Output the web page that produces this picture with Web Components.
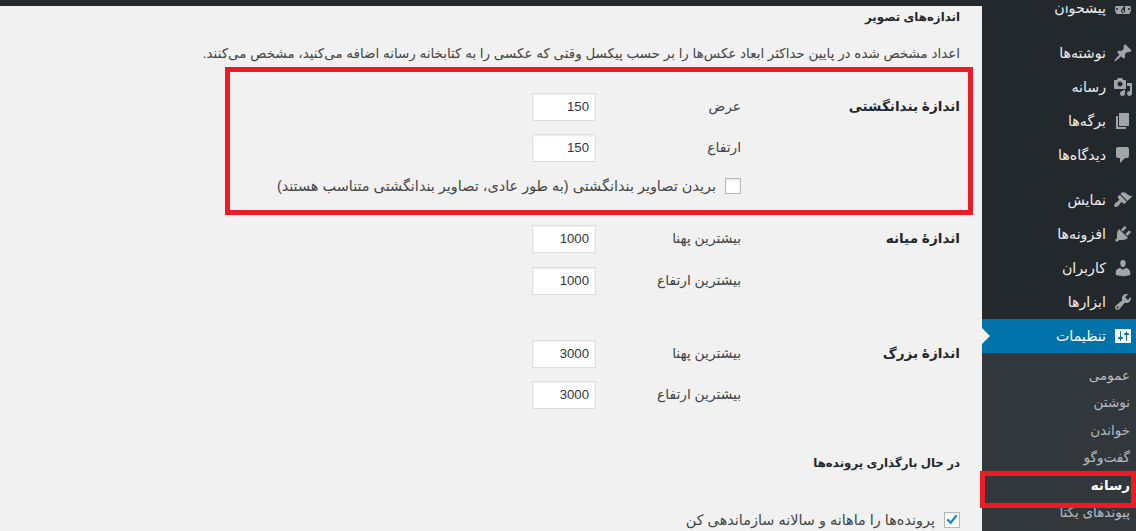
<!DOCTYPE html>
<html lang="fa" dir="rtl">
<head>
<meta charset="utf-8">
<title>تنظیمات رسانه</title>
<style>
  html, body { margin: 0; height: 100%; overflow: hidden; background: #f1f1f1; }
  body { font-family: "Liberation Sans", "DejaVu Sans", sans-serif; font-size: 13px; color: #444; }
</style>
</head>
<body>
<wp-admin>
  <wp-menu slot="menu">
    <wp-menu-item icon="dashboard">پیشخوان</wp-menu-item>
    <wp-menu-item icon="post" gap>نوشته‌ها</wp-menu-item>
    <wp-menu-item icon="media">رسانه</wp-menu-item>
    <wp-menu-item icon="page">برگه‌ها</wp-menu-item>
    <wp-menu-item icon="comment">دیدگاه‌ها</wp-menu-item>
    <wp-menu-item icon="appearance" gap>نمایش</wp-menu-item>
    <wp-menu-item icon="plugin">افزونه‌ها</wp-menu-item>
    <wp-menu-item icon="users">کاربران</wp-menu-item>
    <wp-menu-item icon="tools">ابزارها</wp-menu-item>
    <wp-menu-item icon="settings" active>تنظیمات</wp-menu-item>
    <wp-submenu>
      <wp-sub-item>عمومی</wp-sub-item>
      <wp-sub-item>نوشتن</wp-sub-item>
      <wp-sub-item>خواندن</wp-sub-item>
      <wp-sub-item>گفت‌وگو</wp-sub-item>
      <wp-sub-item current>رسانه</wp-sub-item>
      <wp-sub-item>پیوندهای یکتا</wp-sub-item>
    </wp-submenu>
  </wp-menu>

  <wp-heading>اندازه‌های تصویر</wp-heading>
  <wp-note>اعداد مشخص شده در پایین حداکثر ابعاد عکس‌ها را بر حسب پیکسل وقتی که عکسی را به کتابخانه رسانه اضافه می‌کنید، مشخص می‌کنند.</wp-note>

  <wp-size-group title="اندازۀ بندانگشتی" style="margin-top:29px">
    <wp-num-field label="عرض" value="150"></wp-num-field>
    <wp-num-field label="ارتفاع" value="150"></wp-num-field>
    <wp-check>بریدن تصاویر بندانگشتی (به طور عادی، تصاویر بندانگشتی متناسب هستند)</wp-check>
  </wp-size-group>
  <wp-size-group title="اندازۀ میانه" style="margin-top:30px;--field-gap:14px">
    <wp-num-field label="بیشترین پهنا" value="1000"></wp-num-field>
    <wp-num-field label="بیشترین ارتفاع" value="1000"></wp-num-field>
  </wp-size-group>
  <wp-size-group title="اندازۀ بزرگ" style="margin-top:45px">
    <wp-num-field label="بیشترین پهنا" value="3000"></wp-num-field>
    <wp-num-field label="بیشترین ارتفاع" value="3000"></wp-num-field>
  </wp-size-group>

  <wp-heading style="margin-top:45px">در حال بارگذاری پرونده‌ها</wp-heading>
  <wp-check checked style="margin:39px 0 0">پرونده‌ها را ماهانه و سالانه سازماندهی کن</wp-check>

  <red-mark slot="marks" style="left:225px;top:67px;width:748px;height:148px"></red-mark>
  <red-mark slot="marks" style="left:980px;top:471px;width:156px;height:37px"></red-mark>
</wp-admin>

<script>
const FONT = '"Liberation Sans", "DejaVu Sans", sans-serif';

const ICONS = {
  dashboard: 'M3.76 16h12.48c1.1-1.37 1.76-3.11 1.76-5 0-4.42-3.58-8-8-8s-8 3.58-8 8c0 1.89.66 3.63 1.76 5zM10 4c.55 0 1 .45 1 1s-.45 1-1 1-1-.45-1-1 .45-1 1-1zM6 6c.55 0 1 .45 1 1s-.45 1-1 1-1-.45-1-1 .45-1 1-1zm8 0c.55 0 1 .45 1 1s-.45 1-1 1-1-.45-1-1 .45-1 1-1zm-5.37 5.55L12 7v6c0 1.1-.9 2-2 2s-2-.9-2-2c0-.57.24-1.08.63-1.45zM4 10c.55 0 1 .45 1 1s-.45 1-1 1-1-.45-1-1 .45-1 1-1zm12 0c.55 0 1 .45 1 1s-.45 1-1 1-1-.45-1-1 .45-1 1-1zm-5 3c0-.55-.45-1-1-1s-1 .45-1 1 .45 1 1 1 1-.45 1-1z',
  post: 'M10.44 3.02l1.82-1.82 6.36 6.35-1.83 1.82c-1.05-.68-2.48-.57-3.41.36l-.75.75c-.92.93-1.04 2.35-.35 3.41l-1.83 1.82-2.41-2.41-2.8 2.79c-.42.42-3.38 2.71-3.8 2.29s1.86-3.39 2.28-3.81l2.79-2.79L4.1 9.36l1.83-1.82c1.05.69 2.48.57 3.4-.36l.75-.75c.93-.92 1.05-2.35.36-3.41z',
  media: 'M13 11V4c0-.55-.45-1-1-1h-1.67L9 1H5L3.67 3H2c-.55 0-1 .45-1 1v7c0 .55.45 1 1 1h10c.55 0 1-.45 1-1zM7 4.5c1.38 0 2.5 1.12 2.5 2.5S8.38 9.5 7 9.5 4.5 8.38 4.5 7 5.62 4.5 7 4.5zM14 6h5v10.5c0 1.38-1.12 2.5-2.5 2.5S14 17.88 14 16.5s1.12-2.5 2.5-2.5c.17 0 .34.02.5.05V9h-3V6zm-4 8.05V13h2v3.5c0 1.38-1.12 2.5-2.5 2.5S7 17.88 7 16.5 8.12 14 9.5 14c.17 0 .34.02.5.05z',
  page: 'M6 15V2h10v13H6zm-1 1h8v2H3V5h2v11z',
  comment: 'M5 2h9c1.1 0 2 .9 2 2v7c0 1.1-.9 2-2 2h-2l-5 5v-5H5c-1.1 0-2-.9-2-2V4c0-1.1.9-2 2-2z',
  appearance: 'M14.48 11.06L7.41 3.99l1.5-1.5c.5-.56 2.3-.47 3.51.32 1.21.8 1.43 1.28 2.91 2.1 1.18.64 2.45 1.26 4.45.85zm-.71.71L6.7 4.7 4.93 6.47c-.39.39-.39 1.02 0 1.41l1.06 1.06c.39.39.39 1.03 0 1.42-.6.6-1.43 1.11-2.21 1.69-.35.26-.7.53-1.01.84C1.43 13.23.91 15.24 1.47 16.4c.59 1.16 2.61.64 3.94-.69.31-.31.58-.66.84-1.01.58-.78 1.09-1.61 1.69-2.21.39-.39 1.03-.39 1.42 0l1.06 1.06c.39.39 1.02.39 1.41 0z',
  plugin: 'M13.11 4.36L9.87 7.6 8 5.73l3.24-3.24c.35-.34 1.05-.2 1.56.32.52.51.66 1.21.31 1.55zm-8 1.77l.91-1.12 9.01 9.01-1.19.84c-.71.71-2.63 1.16-3.82 1.16H6.14L4.9 17.26c-.59.59-1.54.59-2.12 0-.59-.58-.59-1.53 0-2.12l1.24-1.24v-3.88c0-1.13.4-3.19 1.09-3.89zm7.26 3.97l3.24-3.24c.34-.35 1.04-.21 1.55.31.52.51.66 1.21.31 1.55l-3.24 3.25z',
  users: 'M10 9.25c-2.27 0-2.73-3.44-2.73-3.44C7 4.02 7.82 2 9.97 2c2.16 0 2.98 2.02 2.71 3.81 0 0-.41 3.44-2.68 3.44zm0 2.57L12.72 10c2.39 0 4.52 2.33 4.52 4.53v2.49s-3.65 1.13-7.24 1.13c-3.65 0-7.24-1.13-7.24-1.13v-2.49c0-2.25 1.94-4.48 4.47-4.48z',
  tools: 'M16.68 9.77c-1.34 1.34-3.3 1.67-4.95.99l-5.41 6.52c-.99.99-2.59.99-3.58 0s-.99-2.59 0-3.57l6.52-5.42c-.68-1.65-.35-3.61.99-4.95 1.28-1.28 3.12-1.62 4.72-1.06l-2.89 2.89 2.82 2.82 2.86-2.87c.53 1.58.18 3.39-1.08 4.65zM3.81 16.21c.4.39 1.04.39 1.43 0 .4-.4.4-1.04 0-1.43-.39-.4-1.03-.4-1.43 0-.39.39-.39 1.03 0 1.43z',
  settings: 'M18 16V4c0-.55-.45-1-1-1H3c-.55 0-1 .45-1 1v12c0 .55.45 1 1 1h14c.55 0 1-.45 1-1zM8 11h1c.55 0 1 .45 1 1s-.45 1-1 1H8v1.5c0 .28-.22.5-.5.5s-.5-.22-.5-.5V13H6c-.55 0-1-.45-1-1s.45-1 1-1h1V5.5c0-.28.22-.5.5-.5s.5.22.5.5V11zm5-2h-1c-.55 0-1-.45-1-1s.45-1 1-1h1V5.5c0-.28.22-.5.5-.5s.5.22.5.5V7h1c.55 0 1 .45 1 1s-.45 1-1 1h-1v5.5c0 .28-.22.5-.5.5s-.5-.22-.5-.5V9z'
};

class WpAdmin extends HTMLElement {
  constructor() {
    super();
    this.attachShadow({ mode: 'open' });
    this.shadowRoot.innerHTML = `
      <style>
        :host { display: block; position: relative; width: 1136px; height: 531px; overflow: hidden; background: #f1f1f1; }
        .bar { height: 6px; background: #23282d; }
        .frame { display: flex; height: 525px; }
        .side { flex: 0 0 154px; background: #23282d; overflow: hidden; }
        .main { flex: 0 0 982px; box-sizing: border-box; padding-right: 22px; overflow: hidden; }
      </style>
      <div class="bar"></div>
      <div class="frame">
        <div class="side"><slot name="menu"></slot></div>
        <div class="main"><slot></slot></div>
      </div>
      <slot name="marks"></slot>
    `;
  }
}

class WpMenu extends HTMLElement {
  constructor() {
    super();
    this.attachShadow({ mode: 'open' });
    this.shadowRoot.innerHTML = `
      <style>
        :host { display: block; margin-top: -15px; }
      </style>
      <slot></slot>
    `;
  }
}

class WpMenuItem extends HTMLElement {
  constructor() {
    super();
    this.attachShadow({ mode: 'open' });
  }

  connectedCallback() {
    const active = this.hasAttribute('active');
    const d = ICONS[this.getAttribute('icon')] || '';
    this.shadowRoot.innerHTML = `
      <style>
        :host { display: block; position: relative; }
        :host([gap]) { margin-top: 11px; }
        .row { display: flex; align-items: center; height: 34px; padding-right: 3px; color: #eee; font: 14.2px/18px ${FONT}; }
        svg { flex: 0 0 20px; width: 20px; height: 20px; margin-left: 7px; fill: #a0a5aa; fill-rule: evenodd; }
        :host([active]) .row { background: #0073aa; color: #fff; }
        :host([active]) svg { fill: #fff; }
        .arrow { position: absolute; left: 0; top: 9px; border: 8px solid transparent; border-left-color: #f1f1f1; }
      </style>
      <div class="row">
        <svg viewBox="0 0 20 20"><path d="${d}"/></svg>
        <span><slot></slot></span>
      </div>
      ${active ? '<div class="arrow"></div>' : ''}
    `;
  }
}

class WpSubmenu extends HTMLElement {
  constructor() {
    super();
    this.attachShadow({ mode: 'open' });
    this.shadowRoot.innerHTML = `
      <style>
        :host { display: block; background: #32373c; padding: 8.5px 0 4px; }
      </style>
      <slot></slot>
    `;
  }
}

class WpSubItem extends HTMLElement {
  constructor() {
    super();
    this.attachShadow({ mode: 'open' });
    this.shadowRoot.innerHTML = `
      <style>
        :host { display: block; height: 27.5px; line-height: 27.5px; padding-right: 6px; color: #b4b9be; font-size: 13.5px; font-family: ${FONT}; }
        :host([current]) { color: #fff; font-weight: bold; }
      </style>
      <slot></slot>
    `;
  }
}

class WpHeading extends HTMLElement {
  constructor() {
    super();
    this.attachShadow({ mode: 'open' });
    this.shadowRoot.innerHTML = `
      <style>
        :host { display: block; margin-top: 2px; color: #23282d; font: bold 11.8px/18px ${FONT}; }
      </style>
      <slot></slot>
    `;
  }
}

class WpNote extends HTMLElement {
  constructor() {
    super();
    this.attachShadow({ mode: 'open' });
    this.shadowRoot.innerHTML = `
      <style>
        :host { display: block; margin-top: 18px; color: #444; font: 13.44px/20px ${FONT}; white-space: nowrap; }
      </style>
      <slot></slot>
    `;
  }
}

class WpSizeGroup extends HTMLElement {
  constructor() {
    super();
    this.attachShadow({ mode: 'open' });
  }

  connectedCallback() {
    this.shadowRoot.innerHTML = `
      <style>
        :host { display: grid; grid-template-columns: 219px 1fr; }
        .th { color: #23282d; font: bold 13.6px/28px ${FONT}; }
        .fields { display: flex; flex-direction: column; gap: var(--field-gap, 13px); }
      </style>
      <div class="th">${this.getAttribute('title') || ''}</div>
      <div class="fields"><slot></slot></div>
    `;
  }
}

class WpNumField extends HTMLElement {
  constructor() {
    super();
    this.attachShadow({ mode: 'open' });
  }

  connectedCallback() {
    this.shadowRoot.innerHTML = `
      <style>
        :host { display: grid; grid-template-columns: 145px 64px; align-items: center; justify-content: start; color: #444; font: 13.8px/18px ${FONT}; }
        .box { box-sizing: border-box; height: 28px; padding: 0 6px; background: #fff; border: 1px solid #ddd; box-shadow: inset 0 1px 2px rgba(0,0,0,.07); color: #32373c; font-size: 13.2px; line-height: 26px; text-align: right; direction: ltr; }
      </style>
      <div>${this.getAttribute('label') || ''}</div>
      <div class="box">${this.getAttribute('value') || ''}</div>
    `;
  }
}

class WpCheck extends HTMLElement {
  constructor() {
    super();
    this.attachShadow({ mode: 'open' });
  }

  connectedCallback() {
    const tick = this.hasAttribute('checked')
      ? '<svg viewBox="0 0 16 16"><path d="M2.5 8.2l1.7-1.7 2.4 2.5 5.2-6.5 1.8 1.5-6.8 8.6z"/></svg>'
      : '';
    this.shadowRoot.innerHTML = `
      <style>
        :host { display: flex; align-items: center; gap: 9px; margin-top: 2px; color: #444; font: 14.45px/18px ${FONT}; white-space: nowrap; }
        .box { flex: 0 0 16px; box-sizing: border-box; width: 16px; height: 16px; background: #fff; border: 1px solid #b4b9be; box-shadow: inset 0 1px 2px rgba(0,0,0,.1); }
        svg { display: block; width: 16px; height: 16px; margin: -1px; fill: #1e8cbe; }
      </style>
      <div class="box">${tick}</div>
      <span><slot></slot></span>
    `;
  }
}

class RedMark extends HTMLElement {
  constructor() {
    super();
    this.attachShadow({ mode: 'open' });
    this.shadowRoot.innerHTML = `
      <style>
        :host { display: block; position: absolute; box-sizing: border-box; border: 5px solid #ed1c24; pointer-events: none; }
      </style>
    `;
  }
}

customElements.define('wp-admin', WpAdmin);
customElements.define('wp-menu', WpMenu);
customElements.define('wp-menu-item', WpMenuItem);
customElements.define('wp-submenu', WpSubmenu);
customElements.define('wp-sub-item', WpSubItem);
customElements.define('wp-heading', WpHeading);
customElements.define('wp-note', WpNote);
customElements.define('wp-size-group', WpSizeGroup);
customElements.define('wp-num-field', WpNumField);
customElements.define('wp-check', WpCheck);
customElements.define('red-mark', RedMark);
</script>
</body>
</html>
